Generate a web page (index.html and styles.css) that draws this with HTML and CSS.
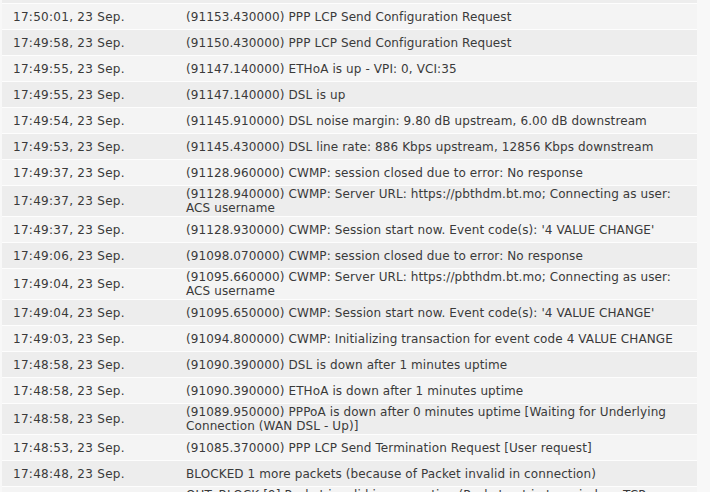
FILE: index.html
```html
<!DOCTYPE html>
<html>
<head>
<meta charset="utf-8">
<link rel="stylesheet" href="styles.css">
</head>
<body>
<table class="log">
<tr><td class="time">17:50:04, 23 Sep.</td><td class="msg">(91156.430000) PPP LCP Send Configuration Request</td></tr>
<tr><td class="time">17:50:01, 23 Sep.</td><td class="msg">(91153.430000) PPP LCP Send Configuration Request</td></tr>
<tr><td class="time">17:49:58, 23 Sep.</td><td class="msg">(91150.430000) PPP LCP Send Configuration Request</td></tr>
<tr><td class="time">17:49:55, 23 Sep.</td><td class="msg">(91147.140000) ETHoA is up - VPI: 0, VCI:35</td></tr>
<tr><td class="time">17:49:55, 23 Sep.</td><td class="msg">(91147.140000) DSL is up</td></tr>
<tr><td class="time">17:49:54, 23 Sep.</td><td class="msg">(91145.910000) DSL noise margin: 9.80 dB upstream, 6.00 dB downstream</td></tr>
<tr><td class="time">17:49:53, 23 Sep.</td><td class="msg">(91145.430000) DSL line rate: 886 Kbps upstream, 12856 Kbps downstream</td></tr>
<tr><td class="time">17:49:37, 23 Sep.</td><td class="msg">(91128.960000) CWMP: session closed due to error: No response</td></tr>
<tr><td class="time">17:49:37, 23 Sep.</td><td class="msg">(91128.940000) CWMP: Server URL: https://pbthdm.bt.mo; Connecting as user: ACS username</td></tr>
<tr><td class="time">17:49:37, 23 Sep.</td><td class="msg">(91128.930000) CWMP: Session start now. Event code(s): '4 VALUE CHANGE'</td></tr>
<tr><td class="time">17:49:06, 23 Sep.</td><td class="msg">(91098.070000) CWMP: session closed due to error: No response</td></tr>
<tr><td class="time">17:49:04, 23 Sep.</td><td class="msg">(91095.660000) CWMP: Server URL: https://pbthdm.bt.mo; Connecting as user: ACS username</td></tr>
<tr><td class="time">17:49:04, 23 Sep.</td><td class="msg">(91095.650000) CWMP: Session start now. Event code(s): '4 VALUE CHANGE'</td></tr>
<tr><td class="time">17:49:03, 23 Sep.</td><td class="msg">(91094.800000) CWMP: Initializing transaction for event code 4 VALUE CHANGE</td></tr>
<tr><td class="time">17:48:58, 23 Sep.</td><td class="msg">(91090.390000) DSL is down after 1 minutes uptime</td></tr>
<tr><td class="time">17:48:58, 23 Sep.</td><td class="msg">(91090.390000) ETHoA is down after 1 minutes uptime</td></tr>
<tr><td class="time">17:48:58, 23 Sep.</td><td class="msg">(91089.950000) PPPoA is down after 0 minutes uptime [Waiting for Underlying Connection (WAN DSL - Up)]</td></tr>
<tr><td class="time">17:48:53, 23 Sep.</td><td class="msg">(91085.370000) PPP LCP Send Termination Request [User request]</td></tr>
<tr><td class="time">17:48:48, 23 Sep.</td><td class="msg">BLOCKED 1 more packets (because of Packet invalid in connection)</td></tr>
<tr><td class="time">17:48:48, 23 Sep.</td><td class="msg">OUT: BLOCK [9] Packet invalid in connection (Packet not in tcp window, TCP 192.168.1.64:52811-&gt;23.45.67.89:443 on ppp3)</td></tr>
</table>
</body>
</html>
```

FILE: styles.css
```css
html, body {
  margin: 0;
  padding: 0;
  background: #f8f8f8;
  overflow: hidden;
}

.log {
  border-collapse: collapse;
  table-layout: fixed;
  margin: -22px 0 0 2px;
  width: 695px;
  font-family: "DejaVu Sans", Verdana, sans-serif;
  font-size: 12px;
  line-height: 14px;
  color: #3a3a3a;
}

.log tr {
  border-bottom: 1px solid #fdfdfd;
}

.log tr:nth-child(even) {
  background: #f4f4f4;
}

.log tr:nth-child(odd) {
  background: #ededed;
}

.log td {
  height: 23px;
  padding: 1px 11px;
  vertical-align: middle;
  text-align: left;
}

.log .time {
  width: 162px;
  white-space: nowrap;
  letter-spacing: 0.28px;
}

.log .msg {
  padding-left: 0;
  padding-right: 8px;
  letter-spacing: 0.1px;
}
```
